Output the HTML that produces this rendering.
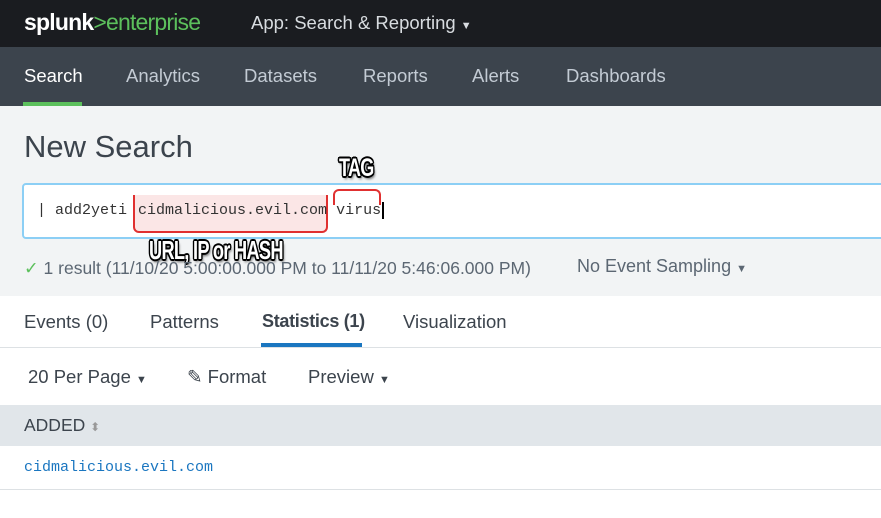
<!DOCTYPE html>
<html><head><style>
body{margin:0;width:881px;height:518px;overflow:hidden;background:#fff;font-family:"Liberation Sans",sans-serif;position:relative}
.a{position:absolute;white-space:nowrap}
.lbl{font-weight:bold;color:#fff;letter-spacing:-1px;transform-origin:left top;text-shadow:-1.5px -1.5px 0 #000,1.5px -1.5px 0 #000,-1.5px 1.5px 0 #000,1.5px 1.5px 0 #000,0 2px 0 #000,0 -2px 0 #000,2px 0 0 #000,-2px 0 0 #000,2px 3px 3px rgba(0,0,0,.6)}
</style></head><body>
<div class="a" style="left:0;top:0;width:881px;height:47px;background:#1a1c20"></div>
<div class="a" style="left:24px;top:9px;font-size:23px;color:#fff;font-weight:bold;letter-spacing:-0.8px">splunk<span style="color:#5cc05c;font-weight:normal">&gt;enterprise</span></div>
<div class="a" style="left:251px;top:12px;font-size:18.5px;color:#d8dce0">App: Search &amp; Reporting <span style="font-size:11px">▼</span></div>
<div class="a" style="left:0;top:47px;width:881px;height:59px;background:#3c444d"></div>
<div class="a" style="top:65px;left:24px;font-size:18.5px;color:#fff">Search</div>
<div class="a" style="left:23px;top:102px;width:59px;height:4px;background:#5cc05c"></div>
<div class="a" style="top:65px;left:126px;font-size:18.5px;color:#c3cbd4">Analytics</div>
<div class="a" style="top:65px;left:244px;font-size:18.5px;color:#c3cbd4">Datasets</div>
<div class="a" style="top:65px;left:363px;font-size:18.5px;color:#c3cbd4">Reports</div>
<div class="a" style="top:65px;left:472px;font-size:18.5px;color:#c3cbd4">Alerts</div>
<div class="a" style="top:65px;left:566px;font-size:18.5px;color:#c3cbd4">Dashboards</div>
<div class="a" style="left:0;top:106px;width:881px;height:190px;background:#f2f4f5"></div>
<div class="a" style="left:24px;top:129px;font-size:31px;color:#3c444d">New Search</div>
<div class="a" style="left:22px;top:183px;width:870px;height:56px;background:#fff;border:2px solid #8ccff5;border-radius:4px;box-sizing:border-box"></div>
<div class="a" style="left:133px;top:195px;width:195px;height:38px;background:#fbe6e6;border:2px solid #e03030;border-top:none;border-radius:0 0 6px 6px;box-sizing:border-box"></div>
<div class="a" style="left:333px;top:189px;width:48px;height:16px;border:2px solid #e03030;border-bottom:none;border-radius:6px 6px 0 0;box-sizing:border-box"></div>
<div class="a" style="left:37px;top:202px;font-family:'Liberation Mono',monospace;font-size:15px;color:#333">| add2yeti <span style="margin-left:2px">cidmalicious.evil.com</span> virus<span style="border-left:2px solid #000;margin-left:1px"></span></div>
<div class="a lbl" style="left:339px;top:154px;font-size:25px;transform:scaleX(.72)">TAG</div>
<div class="a lbl" style="left:149px;top:235px;font-size:26px;transform:scaleX(.7)">URL, IP or HASH</div>
<div class="a" style="left:24px;top:258px;font-size:17.5px;color:#5c6773"><span style="color:#5cc05c">✓</span> 1 result (11/10/20 5:00:00.000 PM to 11/11/20 5:46:06.000 PM)</div>
<div class="a" style="left:577px;top:256px;font-size:18px;color:#5c6773">No Event Sampling <span style="font-size:11px">▼</span></div>
<div class="a" style="top:311px;left:24px;font-size:18.5px;color:#3c444d">Events (0)</div>
<div class="a" style="top:311px;left:150px;font-size:18.5px;color:#3c444d">Patterns</div>
<div class="a" style="top:311px;left:262px;font-size:18px;color:#3c444d;font-weight:bold;letter-spacing:-0.3px">Statistics (1)</div>
<div class="a" style="left:261px;top:343px;width:101px;height:4px;background:#1a76c0"></div>
<div class="a" style="top:311px;left:403px;font-size:18.5px;color:#3c444d">Visualization</div>
<div class="a" style="left:0;top:347px;width:881px;height:1px;background:#dde1e4"></div>
<div class="a" style="top:366px;left:28px;font-size:18.5px;color:#3c444d">20 Per Page <span style="font-size:11px">▼</span></div>
<div class="a" style="top:366px;left:187px;font-size:18.5px;color:#3c444d">✎ Format</div>
<div class="a" style="top:366px;left:308px;font-size:18.5px;color:#3c444d">Preview <span style="font-size:11px">▼</span></div>
<div class="a" style="left:0;top:405px;width:881px;height:41px;background:#e1e6ea"></div>
<div class="a" style="top:415px;left:24px;font-size:17.5px;color:#3c444d">ADDED <span style="color:#999;font-size:12px">⬍</span></div>
<div class="a" style="top:459px;left:24px;font-family:'Liberation Mono',monospace;font-size:15px;color:#1a76c0">cidmalicious.evil.com</div>
<div class="a" style="left:0;top:489px;width:881px;height:1px;background:#dde1e4"></div>
</body></html>
